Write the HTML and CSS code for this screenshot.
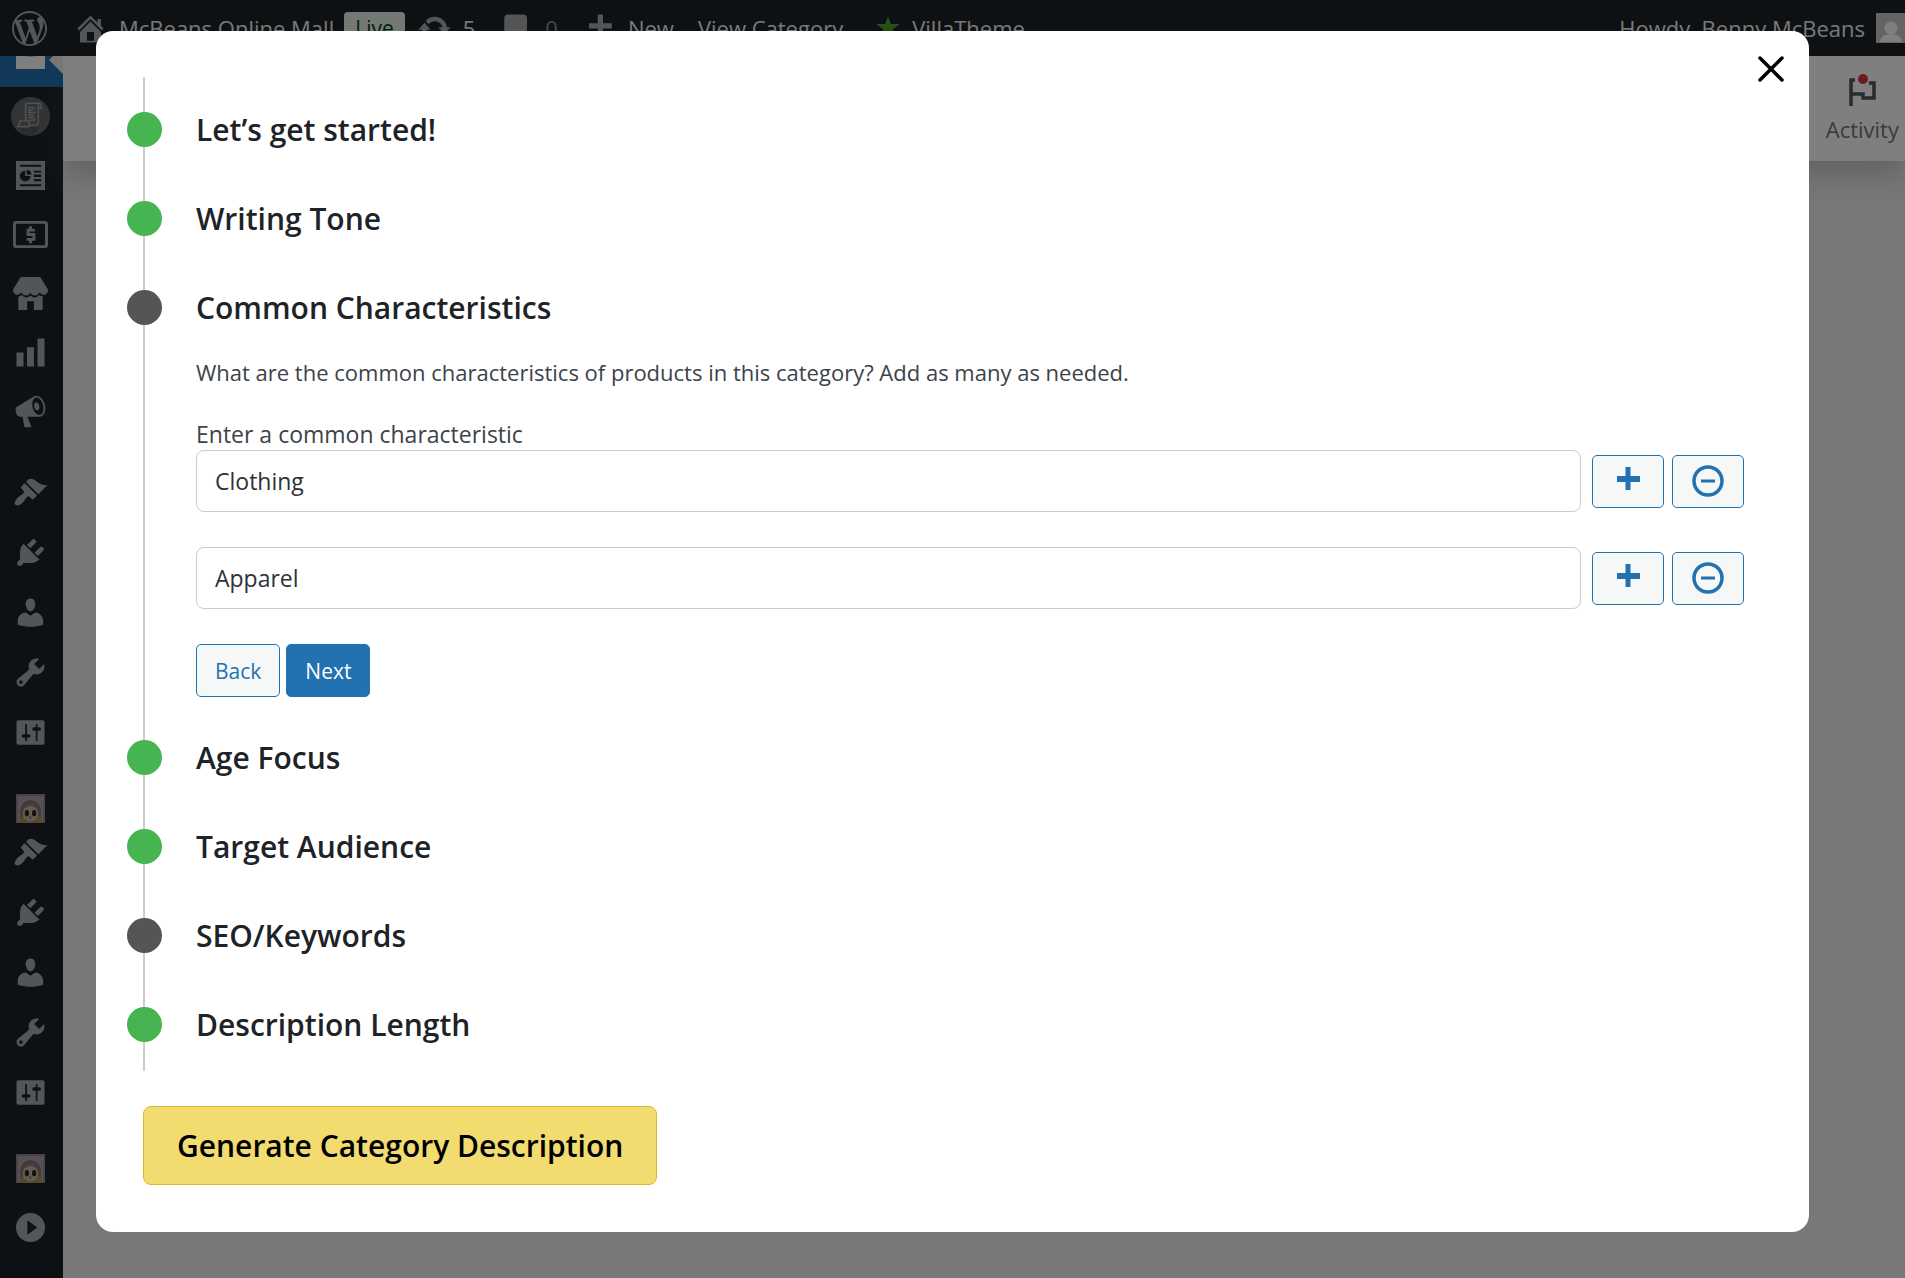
FILE: index.html
```
<!DOCTYPE html>
<html lang="en">
<head>
  <meta charset="UTF-8" />
  <meta name="viewport" content="width=device-width, initial-scale=1.0"/>
  <title>Edit Category</title>
  <link rel="stylesheet" href="styles.css">
</head>
<body>

  <!-- shared icons -->
  <svg class="sprite" aria-hidden="true">
    <symbol id="i-wp" viewBox="0 0 20 20"><path d="M20 10c0-5.51-4.49-10-10-10C4.48 0 0 4.49 0 10c0 5.52 4.48 10 10 10 5.51 0 10-4.48 10-10zM7.78 15.37L4.37 6.22c.55-.02 1.17-.08 1.17-.08.5-.06.44-1.13-.06-1.11 0 0-1.45.11-2.37.11-.18 0-.37 0-.58-.01C4.12 2.69 6.87 1.11 10 1.11c2.33 0 4.45.87 6.05 2.34-.68-.11-1.65.39-1.65 1.58 0 .74.45 1.36.9 2.1.35.61.55 1.36.55 2.46 0 1.49-1.4 5-1.4 5l-3.03-8.37c.54-.02.82-.17.82-.17.5-.05.44-1.25-.06-1.22 0 0-1.44.12-2.38.12-.87 0-2.33-.12-2.33-.12-.5-.03-.56 1.2-.06 1.22l.92.08 1.26 3.41zM17.41 10c.24-.64.74-1.87.43-4.25.7 1.29 1.05 2.71 1.05 4.25 0 3.29-1.73 6.24-4.4 7.78.97-2.59 1.94-5.2 2.92-7.78zM6.1 18.09C3.12 16.65 1.11 13.53 1.11 10c0-1.3.23-2.48.72-3.59C3.25 10.3 4.67 14.2 6.1 18.09zm4.03-6.63l2.58 6.98c-.86.29-1.76.45-2.71.45-.79 0-1.57-.11-2.29-.33.81-2.38 1.62-4.74 2.42-7.1z"/></symbol>
    <symbol id="i-home" viewBox="0 0 20 20"><path d="M16 8.5l1.53 1.53-1.06 1.06L10 4.6l-6.47 6.49-1.06-1.06L10 2.5l4 4v-2h2v4zm-6-2.46l6 5.99V18H4v-5.97zM12 17v-5H8v5h4z"/></symbol>
    <symbol id="i-update" viewBox="0 0 20 20"><path d="M10.2 3.28c3.53 0 6.43 2.61 6.92 6h2.08l-3.5 4-3.5-4h2.32c-.45-1.97-2.21-3.45-4.32-3.45-1.45 0-2.73.71-3.54 1.78L4.95 5.66C6.23 4.2 8.11 3.28 10.2 3.28zm-.4 13.44c-3.52 0-6.43-2.61-6.92-6H.8l3.5-4c1.17 1.33 2.33 2.67 3.5 4H5.48c.45 1.97 2.21 3.45 4.32 3.45 1.45 0 2.73-.71 3.54-1.78l1.71 1.95c-1.28 1.46-3.15 2.38-5.25 2.38z"/></symbol>
    <symbol id="i-comment" viewBox="0 0 20 20"><path d="M5 2h9c1.1 0 2 .9 2 2v7c0 1.1-.9 2-2 2h-2l-5 5v-5H5c-1.1 0-2-.9-2-2V4c0-1.1.9-2 2-2z"/></symbol>
    <symbol id="i-plus" viewBox="0 0 20 20"><path d="M17 7v3h-5v5H9v-5H4V7h5V2h3v5z"/></symbol>
    <symbol id="i-star" viewBox="0 0 20 20"><path d="M10 1l2.2 6H19l-5.500 4.200L15.600 18 10 14l-5.600 4 2.100-6.800L1 7h6.800z"/></symbol>
    <symbol id="i-scroll" viewBox="0 0 40 40"><circle cx="20" cy="20" r="20" fill="#66686a"/><path d="M7 31l23 0-8 8-4 1-8-3z" fill="#55585a"/><g fill="none" stroke="#a0a2a4" stroke-width="1.500"><path d="M15 24V9q0-2.500 2.500-2.500H29q2 0 2 2v3h-3V26q0 3-3 3h-6M28 11V8.500q0-2 1.500-2"/><path d="M9 24.500h10q-1 2 0 4.500 0 1.500-2 1.500H7q2-2 2-6z"/><path d="M17.500 11h7M17.500 13.500h5M17.500 16h8M17.500 18.500h6M17.500 21h7M20 23.500h5"/></g></symbol>
    <symbol id="i-report" viewBox="0 0 30 30"><path fill-rule="evenodd" d="M0 0h30v30H0zM4 4v2h22V4zM4 24v2h22v-2zM18.500 10v2h7.500v-2zM18.500 14v2.500h7.500V14zM18.500 18.500v2.500h7.500v-2.500zM9.500 10A5.500 5.500 0 1 0 15 15.500H9.500zM11 9v5h5a5 5 0 0 0-5-5z"/></symbol>
    <symbol id="i-money" viewBox="0 0 36 30"><rect x="1.500" y="2.500" width="33" height="25" rx="2" fill="none" stroke="currentColor" stroke-width="3"/><path d="M22.500 10.500h-7v4.500h6v5h-7.500M18 6.500v4M18 20v4" fill="none" stroke="currentColor" stroke-width="3"/></symbol>
    <symbol id="i-store" viewBox="0 0 36 34"><path d="M8 0h20l8 13q0 5-4 5.500-3 0-4.500-2.500-2 3-5 3-3.500 0-4.500-3-1.500 3-4.500 3-3.500 0-5-3-1.500 2.500-4.500 2.500-4-.5-4-5.500z"/><path d="M5.500 20q2 0 3.500-1.500 2 2.500 4.500 2.500 2.500 0 4.500-2 2 2 4.500 2 2.500 0 4.500-2.500 1.500 1.500 3.500 1.500V34h-9v-9h-7v9h-9z"/></symbol>
    <symbol id="i-chart" viewBox="0 0 20 20"><path d="M18 18V2h-4v16h4zm-6 0V7H8v11h4zm-10 0h4v-8H2v8z"/></symbol>
    <symbol id="i-mega" viewBox="0 0 20 20"><path d="M18.150 5.940c.46 1.620.38 3.220-.02 4.480-.42 1.280-1.260 2.180-2.300 2.480-.16.060-.26.060-.4.060-.06.020-.12.020-.18.020-.06.020-.14.020-.22.020h-6.800l2.220 5.500c.02.140-.06.260-.14.340-.08.100-.24.160-.34.160H6.950c-.1 0-.26-.06-.34-.16-.08-.08-.16-.2-.14-.34l-1-5.500H4.250l-.02-.02c-.5.060-1.080-.18-1.540-.62s-.88-1.080-1.060-1.880c-.24-.8-.2-1.560-.02-2.200.18-.62.58-1.080 1.060-1.300l.02-.02 9-5.400c.1-.06.18-.1.24-.16.06-.04.14-.08.24-.12.16-.08.28-.12.5-.18 1.040-.3 2.240.1 3.220.98s1.840 2.240 2.260 3.860zm-2.580 5.980h-.02c.4-.1.740-.34 1.040-.7.580-.7.860-1.760.86-3.040 0-.64-.1-1.300-.28-1.980-.34-1.360-1.020-2.500-1.780-3.240s-1.680-1.100-2.460-.88c-.82.220-1.400.96-1.700 2-.32 1.040-.28 2.360.06 3.720.38 1.360 1 2.500 1.800 3.240.78.740 1.620 1.100 2.480.88zm-2.540-7.080c.22-.04.420-.02.620.04.38.160.76.480 1.020 1s.42 1.200.42 1.780c0 .3-.04.560-.12.8-.18.480-.44.840-.86.940-.34.100-.8-.06-1.140-.4s-.64-.86-.78-1.500c-.18-.62-.12-1.240.02-1.720s.48-.84.82-.94z"/></symbol>
    <symbol id="i-brush" viewBox="0 0 20 20"><path d="M14.480 11.060L7.410 3.990l1.500-1.500c.5-.56 2.300-.47 3.510.32 1.210.8 1.430 1.280 2.910 2.100 1.180.64 2.450 1.260 4.450.85zm-.71.710L6.700 4.700 4.930 6.470c-.39.390-.39 1.020 0 1.410l1.060 1.060c.39.390.39 1.030 0 1.420-.6.600-1.430 1.110-2.210 1.690-.35.260-.7.530-1.010.84C1.430 14.230.4 16.080 1.400 17.070c.99 1 2.840-.03 4.180-1.360.31-.31.580-.66.850-1.020.57-.78 1.080-1.610 1.690-2.210.39-.39 1.020-.39 1.410 0l1.060 1.060c.39.390 1.020.39 1.410 0z"/></symbol>
    <symbol id="i-plug" viewBox="0 0 20 20"><path d="M13.110 4.360L9.870 7.600 8 5.730l3.240-3.240c.35-.34 1.050-.2 1.560.32.52.510.66 1.210.31 1.550zm-8 1.770l.91-1.120 9.010 9.010-1.190.84c-.71.710-2.630 1.160-3.820 1.160H6.140L4.900 17.260c-.59.590-1.540.59-2.120 0-.59-.58-.59-1.530 0-2.120l1.240-1.240v-3.880c0-1.130.4-3.190 1.090-3.890zm7.260 3.970l3.240-3.240c.34-.35 1.040-.21 1.550.31.52.510.66 1.210.31 1.550l-3.240 3.250z"/></symbol>
    <symbol id="i-user" viewBox="0 0 20 20"><path d="M10 9.250c-2.270 0-2.730-3.440-2.730-3.440C7 4.020 7.820 2 9.970 2c2.160 0 2.980 2.020 2.710 3.810 0 0-.41 3.440-2.680 3.440zm0 2.570L12.720 10c2.390 0 4.520 2.330 4.520 4.530v2.490s-3.650 1.130-7.240 1.130c-3.650 0-7.240-1.130-7.240-1.130v-2.490c0-2.250 1.940-4.480 4.470-4.480z"/></symbol>
    <symbol id="i-tool" viewBox="0 0 20 20"><path d="M16.680 9.770c-1.340 1.340-3.300 1.670-4.950.99l-5.410 6.520c-.99.990-2.590.99-3.580 0s-.99-2.590 0-3.570l6.520-5.420c-.68-1.650-.35-3.610.99-4.950 1.280-1.280 3.120-1.620 4.720-1.060l-2.890 2.890 2.820 2.820 2.860-2.870c.53 1.580.18 3.390-1.080 4.650zM3.810 16.210c.4.390 1.040.39 1.430 0 .4-.4.4-1.040 0-1.430-.39-.4-1.030-.4-1.430 0-.39.390-.39 1.030 0 1.430z"/></symbol>
    <symbol id="i-settings" viewBox="0 0 20 20"><path d="M18 16V4c0-.55-.45-1-1-1H3c-.55 0-1 .45-1 1v12c0 .55.45 1 1 1h14c.55 0 1-.45 1-1zM8 11h1c.55 0 1 .45 1 1s-.45 1-1 1H8v1.500c0 .28-.22.5-.5.5s-.5-.22-.5-.5V13H6c-.55 0-1-.45-1-1s.45-1 1-1h1V5.500c0-.28.22-.5.5-.5s.5.220.5.500V11zm5-2h-1c-.55 0-1-.45-1-1s.45-1 1-1h1V5.500c0-.28.22-.5.5-.5s.5.220.5.500V7h1c.55 0 1 .45 1 1s-.45 1-1 1h-1v5.500c0 .28-.22.5-.5.5s-.5-.22-.5-.5V9z"/></symbol>
    <symbol id="i-face" viewBox="0 0 28 28"><rect width="28" height="28" fill="#8d8590"/><path d="M1.500 2h25v25h-25z" fill="#b39fae"/><path d="M4 28V17Q5 6 14 6t10 11v11z" fill="#74767c"/><path d="M7 12q7-6 14 0l2 8H5z" fill="#9a7a68"/><path d="M2 28q2-6 5-7h14q4 1 5 7z" fill="#b0925c"/><ellipse cx="14" cy="19" rx="7.500" ry="7.500" fill="#c4b8a4"/><ellipse cx="10.500" cy="18.500" rx="2" ry="3" fill="#26211f"/><ellipse cx="17.500" cy="18.500" rx="2" ry="3" fill="#26211f"/><path d="M14 20l-1 4h2z" fill="#7d6349"/></symbol>
    <symbol id="i-play" viewBox="0 0 28 28"><path fill-rule="evenodd" d="M14 0a14 14 0 1 1 0 28 14 14 0 0 1 0-28zM11 7v14l9.500-7z"/></symbol>
    <symbol id="i-add" viewBox="0 0 32 32"><path d="M13.500 2h5v9H28v6h-9.500v8h-5v-8H5v-6h8.500z"/></symbol>
    <symbol id="i-remove" viewBox="0 0 32 32"><circle cx="16" cy="16" r="14" fill="none" stroke="currentColor" stroke-width="3.500"/><path d="M9 14.500h14v3H9z"/></symbol>
  </svg>

  <header class="adminbar">
    <a class="bar-logo" href="#" aria-label="WordPress"><svg class="icon"><use href="#i-wp"/></svg></a>
    <a class="bar-site" href="#"><svg class="icon"><use href="#i-home"/></svg>McBeans Online Mall</a>
    <span class="badge">Live</span>
    <a class="bar-updates" href="#"><svg class="icon"><use href="#i-update"/></svg>5</a>
    <a class="bar-comments" href="#"><svg class="icon"><use href="#i-comment"/></svg>0</a>
    <a class="bar-new" href="#"><svg class="icon"><use href="#i-plus"/></svg>New</a>
    <a class="bar-view" href="#">View Category</a>
    <a class="bar-theme" href="#"><svg class="icon"><use href="#i-star"/></svg>VillaTheme</a>
    <a class="bar-account" href="#">Howdy, Benny McBeans
      <svg class="avatar" viewBox="0 0 29 30"><rect width="30" height="30" fill="#c9c9c9"/><circle cx="15" cy="15" r="6.500" fill="#fff"/><path d="M4 29q1-8 11-8t11 8z" fill="#fff"/></svg>
    </a>
  </header>

  <div class="layout">
    <nav class="sidebar">
      <a class="menu-current" href="#" aria-label="Products"><svg viewBox="0 0 30 13"><path d="M0 0h29v13H0z" fill="#fff"/><path d="M9 0h11q-5 2-11 0z" fill="#a9c4c9"/></svg></a>
      <div class="menu-group menu-store">
        <a href="#" aria-label="Logs"><svg class="icon-round"><use href="#i-scroll"/></svg></a>
        <a href="#" aria-label="Analytics"><svg class="icon-small"><use href="#i-report"/></svg></a>
        <a href="#" aria-label="Payments"><svg class="icon"><use href="#i-money"/></svg></a>
        <a href="#" aria-label="Shop"><svg class="icon"><use href="#i-store"/></svg></a>
        <a href="#" aria-label="Reports"><svg class="icon"><use href="#i-chart"/></svg></a>
        <a href="#" aria-label="Marketing"><svg class="icon"><use href="#i-mega"/></svg></a>
      </div>
      <div class="menu-group menu-site">
        <a href="#" aria-label="Appearance"><svg class="icon"><use href="#i-brush"/></svg></a>
        <a href="#" aria-label="Plugins"><svg class="icon"><use href="#i-plug"/></svg></a>
        <a href="#" aria-label="Users"><svg class="icon"><use href="#i-user"/></svg></a>
        <a href="#" aria-label="Tools"><svg class="icon"><use href="#i-tool"/></svg></a>
        <a href="#" aria-label="Settings"><svg class="icon"><use href="#i-settings"/></svg></a>
      </div>
      <a class="menu-face" href="#" aria-label="Profile"><svg class="icon-small"><use href="#i-face"/></svg></a>
      <div class="menu-group">
        <a href="#" aria-label="Appearance"><svg class="icon"><use href="#i-brush"/></svg></a>
        <a href="#" aria-label="Plugins"><svg class="icon"><use href="#i-plug"/></svg></a>
        <a href="#" aria-label="Users"><svg class="icon"><use href="#i-user"/></svg></a>
        <a href="#" aria-label="Tools"><svg class="icon"><use href="#i-tool"/></svg></a>
        <a href="#" aria-label="Settings"><svg class="icon"><use href="#i-settings"/></svg></a>
      </div>
      <a class="menu-face" href="#" aria-label="Profile"><svg class="icon-small"><use href="#i-face"/></svg></a>
      <a class="menu-play" href="#" aria-label="Collapse menu"><svg class="icon-small"><use href="#i-play"/></svg></a>
    </nav>

    <main class="content">
      <div class="store-header">
        <button class="activity" type="button">
          <svg class="flag" viewBox="0 0 28 36"><path d="M7 7H3v26M3 21h12v4h11V10h-5" fill="none" stroke="currentColor" stroke-width="3.500"/><circle cx="15" cy="6" r="5" fill="#d63638"/></svg>
          Activity
        </button>
      </div>
    </main>
  </div>

  <div class="overlay">
    <div class="modal" role="dialog" aria-modal="true" aria-label="Category description">
      <button class="close" type="button" aria-label="Close">
        <svg viewBox="0 0 26 26"><path d="M2 2l22 22M24 2L2 24" stroke="#000" stroke-width="3.500" stroke-linecap="round"/></svg>
      </button>

      <ul class="steps">
        <li class="step done"><span class="dot"></span><h2>Let’s get started!</h2></li>
        <li class="step done"><span class="dot"></span><h2>Writing Tone</h2></li>
        <li class="step">
          <span class="dot"></span>
          <div class="step-body">
            <h2>Common Characteristics</h2>
            <p>What are the common characteristics of products in this category? Add as many as needed.</p>
            <form id="characteristics">
              <label for="char1">Enter a common characteristic</label>
              <div class="row">
                <input type="text" id="char1" value="Clothing">
                <button class="btn btn-icon" type="button" aria-label="Add"><svg><use href="#i-add"/></svg></button>
                <button class="btn btn-icon" type="button" aria-label="Remove"><svg><use href="#i-remove"/></svg></button>
              </div>
              <div class="row">
                <input type="text" id="char2" value="Apparel" aria-label="Enter a common characteristic">
                <button class="btn btn-icon" type="button" aria-label="Add"><svg><use href="#i-add"/></svg></button>
                <button class="btn btn-icon" type="button" aria-label="Remove"><svg><use href="#i-remove"/></svg></button>
              </div>
              <div class="actions">
                <button class="btn" type="button">Back</button>
                <button class="btn btn-primary" type="button">Next</button>
              </div>
            </form>
          </div>
        </li>
        <li class="step done"><span class="dot"></span><h2>Age Focus</h2></li>
        <li class="step done"><span class="dot"></span><h2>Target Audience</h2></li>
        <li class="step"><span class="dot"></span><h2>SEO/Keywords</h2></li>
        <li class="step done"><span class="dot"></span><h2>Description Length</h2></li>
      </ul>

      <button class="generate" type="button">Generate Category Description</button>
    </div>
  </div>

</body>
</html>
```
FILE: styles.css
```
* {
  box-sizing: border-box;
}

body {
  margin: 0;
  height: 100vh;
  overflow: hidden;
  display: flex;
  flex-direction: column;
  background: #f0f0f1;
  color: #3c434a;
  font-family: "Segoe UI", "Open Sans", sans-serif;
  font-size: 22px;
  line-height: 32px;
}

button, input {
  font-family: inherit;
  font-size: inherit;
}

.sprite {
  display: none;
}

.icon {
  width: 35px;
  height: 35px;
  fill: currentColor;
}

.icon-small {
  width: 29px;
  height: 29px;
  fill: currentColor;
}

.icon-round {
  width: 39px;
  height: 39px;
}

/* top bar */
.adminbar {
  flex: none;
  display: flex;
  align-items: center;
  height: 56px;
  padding-left: 12px;
  background: #1d2327;
  white-space: nowrap;
}

.adminbar a {
  display: flex;
  align-items: center;
  gap: 11px;
  color: #f0f0f1;
  text-decoration: none;
}

.adminbar .icon {
  color: #a7aaad;
}

.bar-site {
  margin-left: 26px;
}

.badge {
  margin-left: 10px;
  height: 32px;
  padding: 0 11px;
  border-radius: 4px;
  background: #e6f2e8;
  color: #00450c;
  font-size: 21px;
}

.bar-updates {
  margin-left: 12px;
}

.bar-comments {
  margin-left: 24px;
}

.adminbar .bar-comments {
  color: #8c8f94;
}

.bar-new {
  margin-left: 24px;
}

.bar-view {
  margin-left: 24px;
}

.bar-theme {
  margin-left: 32px;
}

.bar-theme .icon {
  width: 26px;
  height: 26px;
  color: #4ea12b;
}

.bar-account {
  margin-left: auto;
}

.avatar {
  width: 29px;
  height: 30px;
}

/* side menu */
.layout {
  flex: 1;
  display: flex;
  min-height: 0;
}

.sidebar {
  flex: none;
  width: 63px;
  overflow: hidden;
  background: #1d2327;
}

.sidebar a {
  display: flex;
  align-items: center;
  justify-content: center;
  height: 60px;
  padding-right: 2px;
  color: #a7aaad;
}

.sidebar .menu-store a {
  height: 59px;
}

.sidebar .menu-current {
  position: relative;
  height: 31px;
  align-items: flex-start;
  background: #2271b1;
}

.menu-current svg {
  width: 30px;
  height: 13px;
}

.menu-current::after {
  content: "";
  position: absolute;
  top: -10px;
  right: 0;
  border: 14px solid transparent;
  border-right-color: #f0f0f1;
  border-left: none;
}

.menu-site {
  margin-top: 21px;
}

.sidebar .menu-face {
  height: 28px;
  margin-top: 32px;
}

.sidebar .menu-play {
  margin-top: 15px;
}

/* page behind the dialog */
.content {
  flex: 1;
}

.store-header {
  display: flex;
  justify-content: flex-end;
  height: 105px;
  background: #fff;
  box-shadow: 0 14px 28px rgba(85, 93, 102, 0.3);
}

.activity {
  display: flex;
  flex-direction: column;
  align-items: center;
  justify-content: center;
  gap: 4px;
  padding: 0 6px;
  border: none;
  background: none;
  color: #757575;
  line-height: 32px;
}

.flag {
  width: 28px;
  height: 36px;
  color: #50575e;
}

/* dialog */
.overlay {
  position: fixed;
  inset: 0;
  padding: 31px 96px;
  overflow: auto;
  background: rgba(0, 0, 0, 0.5);
}

.modal {
  position: relative;
  padding: 46px 65px 47px 47px;
  border-radius: 17px;
  background: #fff;
}

.close {
  position: absolute;
  top: 24px;
  right: 24px;
  width: 28px;
  height: 28px;
  padding: 1px;
  border: none;
  background: none;
  cursor: pointer;
}

.close svg {
  display: block;
}

.steps {
  display: flex;
  flex-direction: column;
  gap: 33px;
  margin: 0;
  padding: 25px 0 18px;
  border-left: 2px solid #ccc;
  list-style: none;
}

.step {
  display: flex;
  gap: 34px;
}

.dot {
  flex: none;
  width: 35px;
  height: 35px;
  margin: 10px 0 0 -18px;
  border-radius: 50%;
  background: #555;
}

.done .dot {
  background: #46b450;
}

.step-body {
  flex: 1;
}

h2 {
  margin: 0;
  color: #1d2327;
  font-size: 30px;
  font-weight: 600;
  line-height: 56px;
}

.step-body p {
  margin: 20px 0 30px;
}

.step-body label {
  display: block;
  font-size: 23px;
}

.row {
  display: flex;
  align-items: center;
  gap: 8px;
  margin-bottom: 35px;
}

.row input {
  flex: 1;
  height: 62px;
  margin-right: 3px;
  padding: 0 18px;
  border: 1px solid #ccc;
  border-radius: 8px;
  color: #2c3338;
  font-size: 23px;
}

.actions {
  display: flex;
  gap: 6px;
}

.btn {
  height: 53px;
  padding: 0 18px;
  border: 1px solid #2271b1;
  border-radius: 5px;
  background: #f6f7f7;
  color: #2271b1;
  font-size: 21px;
  cursor: pointer;
}

.btn-primary {
  background: #2271b1;
  color: #fff;
}

.btn-icon {
  display: flex;
  align-items: center;
  justify-content: center;
  width: 72px;
  padding: 0;
}

.btn-icon svg {
  width: 32px;
  height: 32px;
  fill: currentColor;
}

.generate {
  height: 79px;
  margin-top: 35px;
  padding: 0 33px;
  border: 1px solid #dbb829;
  border-radius: 8px;
  background: #f2dc6f;
  color: #000;
  font-size: 30px;
  font-weight: 600;
  cursor: pointer;
}
```
